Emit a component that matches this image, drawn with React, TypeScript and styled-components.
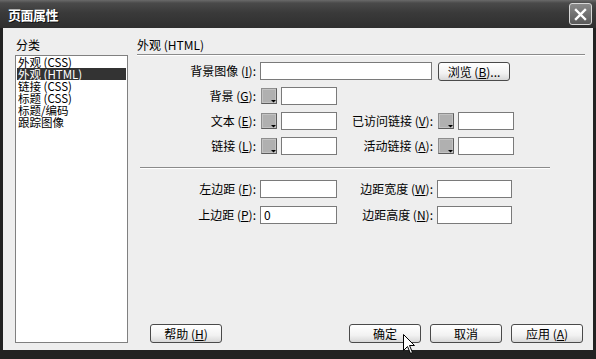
import React from 'react';
import styled, { createGlobalStyle } from 'styled-components';

const GlobalStyle = createGlobalStyle`
  html, body {
    margin: 0;
    padding: 0;
    background: #1f1f1f;
  }
  * {
    box-sizing: border-box;
  }
`;

const FONT = `"Noto Sans CJK SC", "Liberation Sans", sans-serif`;

const Dialog = styled.div`
  position: relative;
  display: flex;
  flex-direction: column;
  width: 596px;
  height: 359px;
  background: #222;
  font-family: ${FONT};
  font-size: 12px;
  color: #000;
  overflow: hidden;
`;

const TitleBar = styled.div`
  display: flex;
  align-items: center;
  justify-content: space-between;
  height: 28px;
  padding: 0 4px 0 8px;
  background: linear-gradient(#6a6a6a 0, #4a4a4a 3px, #3a3a3a 45%, #2f2f2f 100%);
`;

const Title = styled.div`
  color: #fff;
  font-weight: bold;
  font-size: 13px;
  letter-spacing: -0.5px;
  text-shadow: 1px 1px 0 #111;
`;

const CloseButton = styled.div`
  display: flex;
  align-items: center;
  justify-content: center;
  width: 23px;
  height: 22px;
  border: 1px solid #d8d8d8;
  border-radius: 3px;
  background: linear-gradient(#8a8a8a, #5a5a5a);
`;

const Body = styled.div`
  flex: 1;
  display: flex;
  margin: 0 3px 9px 3px;
  padding: 9px 8px 7px 12px;
  background: #eeeeee;
`;

const Sidebar = styled.div`
  display: flex;
  flex-direction: column;
  width: 113px;
`;

const SideLabel = styled.div`
  height: 18px;
  line-height: 16px;
  padding-left: 1px;
`;

const List = styled.div`
  flex: 1;
  border: 1px solid #808080;
  background: #fff;
  padding: 0 1px;
`;

const ListItem = styled.div<{ $selected?: boolean }>`
  height: 12px;
  line-height: 12px;
  font-size: 11.5px;
  padding-left: 1px;
  white-space: nowrap;
  background: ${(p) => (p.$selected ? '#333' : 'transparent')};
  color: ${(p) => (p.$selected ? '#fff' : '#000')};
`;

const Main = styled.div`
  display: flex;
  flex-direction: column;
  flex: 1;
  margin-left: 9px;
`;

const Heading = styled.div`
  height: 18px;
  line-height: 16px;
  border-bottom: 1px solid #8a8a8a;
  box-shadow: 0 1px 0 #fff;
`;

const Form = styled.div<{ $top: number; $gap: number }>`
  display: flex;
  flex-direction: column;
  gap: ${(p) => p.$gap}px;
  margin-top: ${(p) => p.$top}px;
`;

const Row = styled.div`
  display: flex;
  align-items: center;
  height: 18px;
`;

const Label = styled.div<{ $w: number }>`
  width: ${(p) => p.$w}px;
  text-align: right;
  white-space: nowrap;
  padding-right: 4px;
  line-height: 18px;
  u {
    text-decoration: underline;
    text-underline-offset: 1px;
  }
`;

const Input = styled.div<{ $w: number }>`
  width: ${(p) => p.$w}px;
  height: 18px;
  border: 1px solid #7a7a7a;
  background: #fff;
  padding-left: 3px;
  line-height: 16px;
`;

const Swatch = styled.svg`
  display: block;
  flex: none;
  margin: 0 4px 0 1px;
`;

const Separator = styled.div`
  width: 410px;
  margin-left: 3px;
  margin-top: 12px;
  border-top: 1px solid #8a8a8a;
  border-bottom: 1px solid #fff;
`;

const Spacer = styled.div`
  flex: 1;
`;

const ButtonRow = styled.div`
  display: flex;
  align-items: center;
  gap: 9px;
  padding: 0 2px 0 13px;
`;

const Button = styled.div`
  display: flex;
  align-items: center;
  justify-content: center;
  width: 72px;
  height: 19px;
  border: 1px solid #4a4a4a;
  border-radius: 3px;
  background: linear-gradient(#ffffff, #f2f2f2 60%, #d8d8d8);
  white-space: nowrap;
  u {
    text-decoration: underline;
    text-underline-offset: 1px;
  }
`;

const BrowseButton = styled(Button)`
  margin-left: 6px;
`;

const Cursor = styled.svg`
  position: absolute;
  left: 403px;
  top: 334px;
`;

function Mn({ k }: { k: string }) {
  return (
    <>
      (<u>{k}</u>)
    </>
  );
}

function ColorPicker() {
  return (
    <Swatch width="16" height="16" viewBox="0 0 16 16">
      <rect x="0.5" y="0.5" width="15" height="15" fill="#c2c2c2" stroke="#8e8e8e" />
      <path d="M15.5 0.5 V15.5 H0.5" fill="none" stroke="#5c5c5c" />
      <rect x="2" y="2" width="12" height="12" fill="#b0b0b0" />
      <path d="M10 12 H15 L12.5 14.5 Z" fill="#000" />
    </Swatch>
  );
}

export default function App() {
  return (
    <Dialog>
      <GlobalStyle />
      <TitleBar>
        <Title>页面属性</Title>
        <CloseButton>
          <svg width="13" height="13" viewBox="0 0 13 13">
            <path d="M2 2 L11 11 M11 2 L2 11" stroke="#fff" strokeWidth="2.4" strokeLinecap="square" />
          </svg>
        </CloseButton>
      </TitleBar>

      <Body>
        <Sidebar>
          <SideLabel>分类</SideLabel>
          <List>
            <ListItem>外观 (CSS)</ListItem>
            <ListItem $selected>外观 (HTML)</ListItem>
            <ListItem>链接 (CSS)</ListItem>
            <ListItem>标题 (CSS)</ListItem>
            <ListItem>标题/编码</ListItem>
            <ListItem>跟踪图像</ListItem>
          </List>
        </Sidebar>

        <Main>
          <Heading>外观 (HTML)</Heading>

          <Form $top={7} $gap={7}>
            <Row>
              <Label $w={123}>
                背景图像 <Mn k="I" />:
              </Label>
              <Input $w={172} />
              <BrowseButton>
                浏览 <Mn k="B" />...
              </BrowseButton>
            </Row>
            <Row>
              <Label $w={123}>
                背景 <Mn k="G" />:
              </Label>
              <ColorPicker />
              <Input $w={56} />
            </Row>
            <Row>
              <Label $w={123}>
                文本 <Mn k="E" />:
              </Label>
              <ColorPicker />
              <Input $w={56} />
              <Label $w={100}>
                已访问链接 <Mn k="V" />:
              </Label>
              <ColorPicker />
              <Input $w={56} />
            </Row>
            <Row>
              <Label $w={123}>
                链接 <Mn k="L" />:
              </Label>
              <ColorPicker />
              <Input $w={56} />
              <Label $w={100}>
                活动链接 <Mn k="A" />:
              </Label>
              <ColorPicker />
              <Input $w={56} />
            </Row>
          </Form>

          <Separator />

          <Form $top={11} $gap={8}>
            <Row>
              <Label $w={123}>
                左边距 <Mn k="F" />:
              </Label>
              <Input $w={77} />
              <Label $w={100}>
                边距宽度 <Mn k="W" />:
              </Label>
              <Input $w={75} />
            </Row>
            <Row>
              <Label $w={123}>
                上边距 <Mn k="P" />:
              </Label>
              <Input $w={77}>0</Input>
              <Label $w={100}>
                边距高度 <Mn k="N" />:
              </Label>
              <Input $w={75} />
            </Row>
          </Form>

          <Spacer />

          <ButtonRow>
            <Button>
              帮助 <Mn k="H" />
            </Button>
            <Spacer />
            <Button>确定</Button>
            <Button>取消</Button>
            <Button>
              应用 <Mn k="A" />
            </Button>
          </ButtonRow>
        </Main>
      </Body>

      <Cursor width="13" height="21" viewBox="0 0 13 21">
        <path
          d="M0.5 0.5 L0.5 16.5 L4.5 12.5 L7.5 19.5 L9.5 18.5 L6.5 11.5 L11.5 11.5 Z"
          fill="#fff"
          stroke="#000"
          strokeWidth="1"
        />
      </Cursor>
    </Dialog>
  );
}
